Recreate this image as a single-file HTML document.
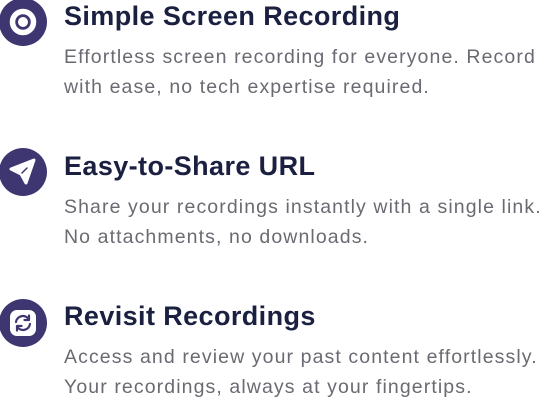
<!DOCTYPE html>
<html><head><meta charset="utf-8"><style>
html,body{margin:0;padding:0;background:#fff;width:548px;height:402px;overflow:hidden}
.it{position:absolute;left:0;width:548px}
.ic{position:absolute;left:-1px;width:48px;height:48px;border-radius:50%;background:#3e3670}
.h{position:absolute;left:64px;font:600 27px "Liberation Sans",sans-serif;color:#1b2040;white-space:nowrap;letter-spacing:0.4px}
.p{position:absolute;left:64px;font:19.5px/30px "Liberation Sans",sans-serif;color:#6a6a72;white-space:nowrap;letter-spacing:1.1px}
</style></head><body>
<div class="it" style="top:0">
<div class="ic" style="top:-2px"><svg width="48" height="48"><circle cx="24" cy="24" r="10.5" fill="none" stroke="#fff" stroke-width="5.5"/><circle cx="24" cy="24" r="5" fill="#fff"/></svg></div>
<div class="h" style="top:1px">Simple Screen Recording</div>
<div class="p" style="top:42px">Effortless screen recording for everyone. Record<br>with ease, no tech expertise required.</div>
</div>
<div class="it" style="top:150px">
<div class="ic" style="top:-2px"><svg width="48" height="48"><path d="M12 21 L35 12 L27 35 L22 26 Z" fill="#fff" stroke="#fff" stroke-width="3" stroke-linejoin="round"/><path d="M23 25 L28 20" stroke="#3e3670" stroke-width="1.5" stroke-linecap="round"/></svg></div>
<div class="h" style="top:1px">Easy-to-Share URL</div>
<div class="p" style="top:42px">Share your recordings instantly with a single link.<br>No attachments, no downloads.</div>
</div>
<div class="it" style="top:300px">
<div class="ic" style="top:-1px"><svg width="48" height="48"><rect x="11" y="11" width="26" height="26" rx="7" fill="#fff"/><path d="M17 23 A7 7 0 0 1 30 20.5 M31 25 A7 7 0 0 1 18 27.5" fill="none" stroke="#3e3670" stroke-width="2.2" stroke-linecap="round"/><path d="M30 16.5 L30 21 L25.5 21 M18 31.5 L18 27 L22.5 27" fill="none" stroke="#3e3670" stroke-width="2.2" stroke-linecap="round" stroke-linejoin="round"/></svg></div>
<div class="h" style="top:1px">Revisit Recordings</div>
<div class="p" style="top:42px">Access and review your past content effortlessly.<br>Your recordings, always at your fingertips.</div>
</div>
</body></html>
